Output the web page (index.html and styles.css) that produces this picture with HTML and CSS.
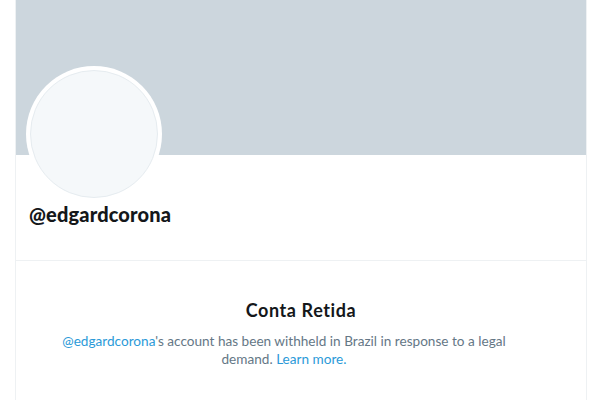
FILE: index.html
```html
<!DOCTYPE html>
<html lang="en">
<head>
    <meta charset="UTF-8">
    <title>@edgardcorona</title>
    <link rel="stylesheet" href="styles.css">
</head>
<body>
    <main class="column">
        <div class="banner"></div>
        <div class="profile">
            <div class="avatar"><div class="avatar-inner"></div></div>
            <h2 class="handle">@edgardcorona</h2>
        </div>
        <section class="withheld">
            <h3>Conta Retida</h3>
            <p><a href="#">@edgardcorona</a>'s account has been withheld in Brazil in response to a legal demand. <a href="#">Learn more.</a></p>
        </section>
    </main>
</body>
</html>
```

FILE: styles.css
```css
body {
    margin: 0;
    background: #fff;
    font-family: "Lato", "Open Sans", sans-serif;
    color: #14171a;
}

.column {
    width: 570px;
    margin-left: 15px;
    min-height: 400px;
    border-left: 1px solid #eef1f3;
    border-right: 1px solid #eef1f3;
}

.banner {
    height: 155px;
    background-color: #ccd6dd;
}

.profile {
    display: flow-root;
    height: 105px;
    padding: 0 15px 0 10px;
    border-bottom: 1px solid #eef1f3;
}

.avatar {
    width: 136px;
    height: 136px;
    margin-top: -89px;
    border-radius: 50%;
    background: #fff;
    padding: 4px;
    box-sizing: border-box;
}

.avatar-inner {
    width: 100%;
    height: 100%;
    border-radius: 50%;
    background: #f5f8fa;
    border: 1px solid #e6ecf0;
    box-sizing: border-box;
}

.handle {
    margin: 0 0 0 3px;
    font-size: 20px;
    font-weight: 900;
    line-height: 24px;
    letter-spacing: 0.15px;
}

.withheld {
    text-align: center;
    padding: 37px 40px 0;
}

.withheld h3 {
    margin: 0;
    font-size: 18px;
    font-weight: 700;
    line-height: 24px;
    letter-spacing: 0.6px;
}

.withheld p {
    margin: 10px auto 0;
    max-width: 460px;
    padding-right: 34px;
    font-size: 13.6px;
    line-height: 18px;
    color: #657786;
}

.withheld a {
    color: #2b9ad8;
    text-decoration: none;
}
```
